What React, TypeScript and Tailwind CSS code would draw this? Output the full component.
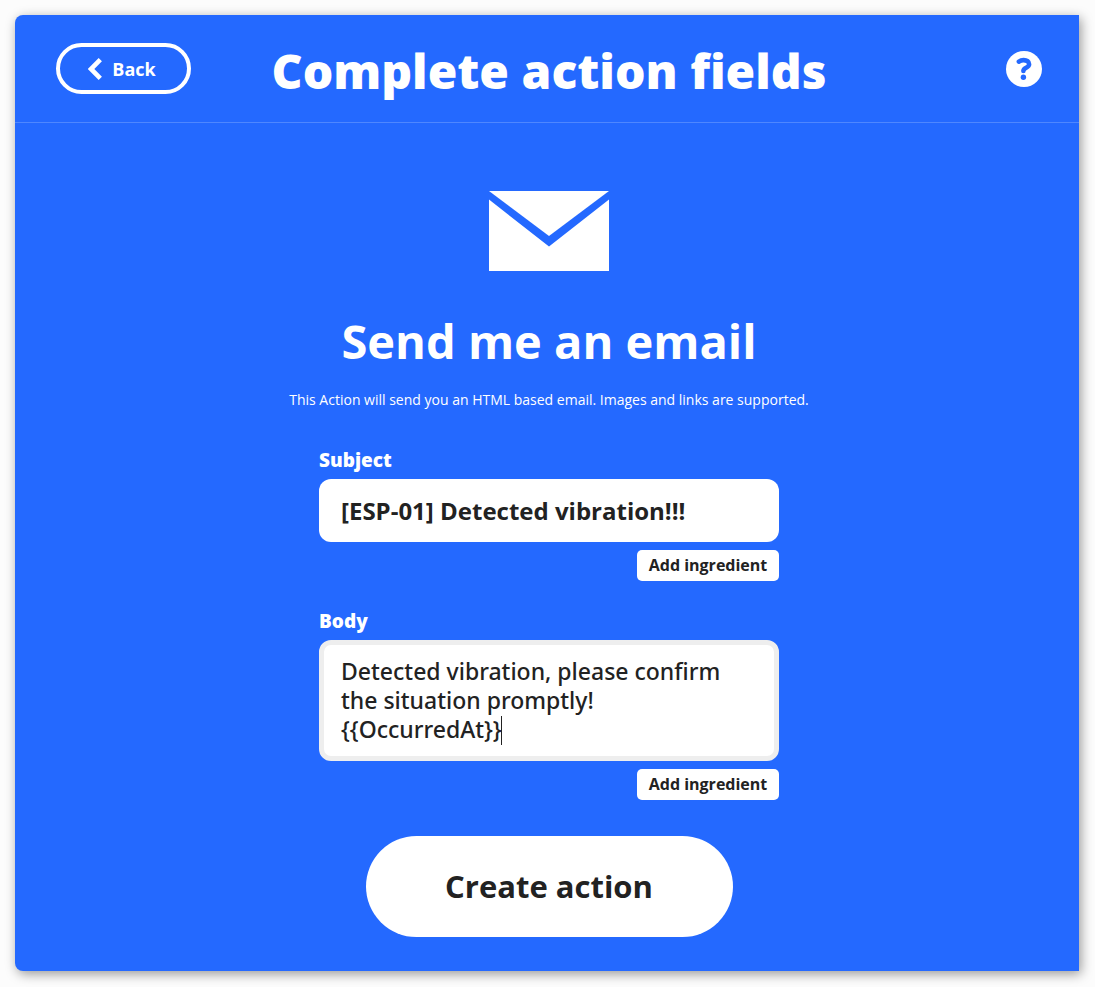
import { useEffect, useRef, useState } from "react";

function ChevronLeftIcon() {
  return (
    <svg width="14" height="22" viewBox="0 0 14 22" fill="none" aria-hidden="true">
      <path d="M12.300 1.700 3 11l9.300 9.300" stroke="currentColor" strokeWidth="4.600" />
    </svg>
  );
}

function HelpIcon() {
  return (
    <svg width="36" height="36" viewBox="0 0 36 36" fill="none" aria-hidden="true">
      <circle cx="18" cy="18" r="18" fill="white" />
      <path
        d="M12.900 10.600c1.400-1 3-1.500 4.700-1.500 3.300 0 5.500 1.500 5.500 4.200 0 3.700-5.700 3.300-5.700 6.600"
        stroke="#2469ff"
        strokeWidth="4.600"
        strokeLinecap="round"
        strokeLinejoin="round"
      />
      <circle cx="17.400" cy="26.200" r="2.700" fill="#2469ff" />
    </svg>
  );
}

function MailIcon() {
  return (
    <svg width="120" height="80" viewBox="0 0 120 80" fill="white" aria-hidden="true">
      <path d="M0 0h120L60 45z" />
      <path d="M0 8.500 60 55.500 120 8.500V80H0z" />
    </svg>
  );
}

function AddIngredient() {
  return (
    <button
      type="button"
      className="mt-2 h-[31px] w-[142px] self-end rounded-[5px] bg-white text-[16px] leading-[31px] font-bold text-[#222222]"
    >
      Add ingredient
    </button>
  );
}

export default function App() {
  const [subject, setSubject] = useState("[ESP-01] Detected vibration!!!");
  const [body, setBody] = useState(
    "Detected vibration, please confirm the situation promptly!\n{{OccurredAt}}",
  );
  const [edited, setEdited] = useState(false);
  const bodyRef = useRef<HTMLTextAreaElement>(null);

  useEffect(() => {
    const el = bodyRef.current;
    if (!el) return;
    el.focus();
    el.setSelectionRange(el.value.length, el.value.length);
  }, []);

  return (
    <div className="min-h-screen bg-[#fcfcfc] p-4 pt-[15px] pl-[15px] font-['Open_Sans','Noto_Sans',sans-serif]">
      <div className="rounded-l-lg bg-[#2469ff] pb-[34px] text-white shadow-[2px_3px_12px_rgba(0,0,0,0.4)]">
        <header className="grid grid-cols-[1fr_auto_1fr] items-center border-b border-white/20 pt-7 pr-[37px] pb-7 pl-[41px]">
          <button
            type="button"
            className="flex h-[51px] w-[135px] items-center justify-center gap-2.5 rounded-full border-4 border-white pr-[3px] text-[18px] leading-[24px] font-bold"
          >
            <ChevronLeftIcon />
            Back
          </button>
          <h1 className="pt-1 font-['Noto_Sans','Open_Sans',sans-serif] text-[48px] leading-[47px] font-black">
            Complete action fields
          </h1>
          <button type="button" aria-label="Help" className="justify-self-end">
            <HelpIcon />
          </button>
        </header>

        <main className="flex flex-col items-center pt-[68px] pr-[37px] pl-[41px]">
          <MailIcon />
          <h2 className="mt-[38px] text-[47px] leading-[64px] font-bold">Send me an email</h2>
          <p className="mt-[17px] text-[14px] leading-[20px]">
            This Action will send you an HTML based email. Images and links are supported.
          </p>

          <form className="mt-9 flex flex-col items-center" onSubmit={(e) => e.preventDefault()}>
            <div className="flex w-[460px] flex-col">
              <label htmlFor="subject" className="text-[19px] leading-[28px] font-extrabold">
                Subject
              </label>
              <input
                id="subject"
                type="text"
                value={subject}
                onChange={(e) => setSubject(e.target.value)}
                className="mt-[5px] h-[63px] rounded-xl bg-white px-[22px] text-[24px] font-bold text-[#222222] outline-none"
              />
              <AddIngredient />
            </div>

            <div className="mt-[26px] flex w-[460px] flex-col">
              <label htmlFor="body" className="text-[19px] leading-[28px] font-extrabold">
                Body
              </label>
              <div className="relative mt-[5px] flex">
                <textarea
                  id="body"
                  ref={bodyRef}
                  rows={3}
                  value={body}
                  onChange={(e) => {
                    setEdited(true);
                    setBody(e.target.value);
                  }}
                  className={
                    "w-full resize-none overflow-hidden rounded-xl border-[5px] border-[#eeeeee] bg-white px-[17px] py-3 font-['Noto_Sans','Open_Sans',sans-serif] text-[23px] leading-[29px] font-medium text-[#222222] outline-none " +
                    (edited ? "caret-[#222222]" : "caret-transparent")
                  }
                />
                {!edited && (
                  <span
                    aria-hidden="true"
                    className="pointer-events-none absolute bottom-4 left-[182px] h-[29px] w-px bg-[#222222]"
                  />
                )}
              </div>
              <AddIngredient />
            </div>

            <button
              type="submit"
              className="mt-9 h-[101px] w-[367px] rounded-full bg-white text-[31px] font-bold text-[#222222]"
            >
              Create action
            </button>
          </form>
        </main>
      </div>
    </div>
  );
}
